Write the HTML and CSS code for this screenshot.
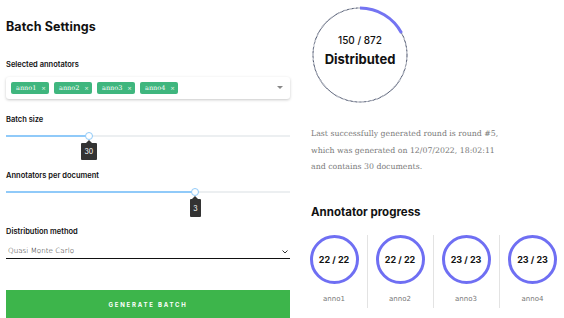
FILE: index.html
```html
<!DOCTYPE html>
<html>
<head>
<meta charset="utf-8">
<link rel="stylesheet" href="styles.css">
</head>
<body>
<div class="page">
  <div class="left">
    <h1 class="title">Batch Settings</h1>
    <div class="label first">Selected annotators</div>
    <div class="multi">
      <span class="chip">anno1 <span class="x">×</span></span>
      <span class="chip">anno2 <span class="x">×</span></span>
      <span class="chip">anno3 <span class="x">×</span></span>
      <span class="chip">anno4 <span class="x">×</span></span>
      <span class="caret"></span>
    </div>
    <div class="label gap16">Batch size</div>
    <div class="slider">
      <div class="track"></div>
      <div class="fill" style="width:29.2%"></div>
      <div class="thumb" style="left:29.2%"></div>
      <div class="tip wide" style="left:29.2%">30</div>
    </div>
    <div class="label gap30">Annotators per document</div>
    <div class="slider">
      <div class="track"></div>
      <div class="fill" style="width:66.5%"></div>
      <div class="thumb" style="left:66.5%"></div>
      <div class="tip narrow" style="left:66.5%">3</div>
    </div>
    <div class="label gap30">Distribution method</div>
    <div class="select">
      <span>Quasi Monte Carlo</span>
      <svg class="chev" width="6" height="4" viewBox="0 0 6 4"><path d="M0.5 0.5 L3 3 L5.5 0.5" fill="none" stroke="#333" stroke-width="1"/></svg>
    </div>
    <button class="btn">GENERATE BATCH</button>
  </div>
  <div class="right">
    <div class="main-ring">
      <svg width="100" height="100" viewBox="0 0 100 100">
        <circle cx="50" cy="50" r="47" fill="none" stroke="#1f2a48" stroke-width="1.1" stroke-dasharray="0.7 0.6"/>
        <circle cx="50" cy="50" r="47" fill="none" stroke="#7474f2" stroke-width="3" stroke-dasharray="50.8 300" transform="rotate(-90 50 50)"/>
      </svg>
      <div class="ring-text">
        <div class="count">150 / 872</div>
        <div class="dist">Distributed</div>
      </div>
    </div>
    <p class="info">Last successfully generated round is round #5,<br>which was generated on 12/07/2022, 18:02:11<br>and contains 30 documents.</p>
    <h2 class="sub">Annotator progress</h2>
    <div class="grid">
      <div class="cell"><div class="ring">22 / 22</div><div class="name">anno1</div></div>
      <div class="cell"><div class="ring">22 / 22</div><div class="name">anno2</div></div>
      <div class="cell"><div class="ring">23 / 23</div><div class="name">anno3</div></div>
      <div class="cell"><div class="ring">23 / 23</div><div class="name">anno4</div></div>
    </div>
  </div>
</div>
</body>
</html>
```
FILE: styles.css
```css
* { box-sizing: border-box; }
html, body { margin: 0; padding: 0; background: #fff; }
body { font-family: Inter, "Open Sans", sans-serif; color: #111; width: 564px; height: 318px; overflow: hidden; }
.page { display: flex; }
.left { width: 284px; margin-left: 6px; display: flex; flex-direction: column; }
.title { margin: 19px 0 0; font-size: 12.5px; line-height: 16px; font-weight: 700; letter-spacing: 0.1px; }
.label { font-size: 7.5px; line-height: 10px; font-weight: 600; }
.label.first { margin-top: 25px; }
.gap16 { margin-top: 16px; }
.gap30 { margin-top: 30px; }
.multi { margin-top: 7px; height: 22px; border-radius: 3px; box-shadow: 0 1px 3px rgba(0,0,0,0.22); display: flex; align-items: center; padding-left: 5px; gap: 5px; position: relative; }
.chip { background: #3fb67e; color: #fff; font-family: "DejaVu Serif", serif; font-size: 6.5px; height: 12px; line-height: 12px; border-radius: 2px; padding: 0 4px 0 5px; display: inline-flex; align-items: center; gap: 5px; width: 38px; }
.chip .x { font-family: Inter, sans-serif; font-size: 7px; color: #cfeedd; }
.caret { position: absolute; right: 7px; top: 9px; width: 0; height: 0; border-left: 3.5px solid transparent; border-right: 3.5px solid transparent; border-top: 3.5px solid #888; }
.slider { margin-top: 6px; height: 10px; position: relative; }
.track { position: absolute; left: 0; right: 0; top: 4px; height: 2px; background: #eceff1; }
.fill { position: absolute; left: 0; top: 4px; height: 2px; background: #90caf9; }
.thumb { position: absolute; top: 1px; width: 8px; height: 8px; margin-left: -4px; border-radius: 50%; background: #fff; border: 1px solid #90caf9; }
.tip { position: absolute; top: 12px; height: 17px; background: #333; color: #fff; font-size: 7px; display: flex; align-items: center; justify-content: center; border-radius: 1px; }
.tip::before { content: ""; position: absolute; top: -3px; left: 50%; margin-left: -3px; border-left: 3px solid transparent; border-right: 3px solid transparent; border-bottom: 3px solid #333; }
.tip.wide { width: 16px; margin-left: -8px; }
.tip.narrow { width: 11px; margin-left: -5px; height: 18px; }
.select { margin-top: 1px; height: 21px; padding: 6px 0 0 2px; border-bottom: 1px solid #111; display: flex; justify-content: space-between; font-size: 7.2px; line-height: 14px; color: #222; font-family: "DejaVu Sans", sans-serif; font-weight: 300; }
.chev { margin: 6px 2px 0 0; }
.btn { margin-top: 31px; height: 28px; width: 284px; border: none; background: #3db54b; color: #fff; font-family: Inter, sans-serif; font-size: 6px; font-weight: 700; letter-spacing: 1.8px; padding: 0; }
.right { margin-left: 11px; width: 263px; display: flex; flex-direction: column; }
.main-ring { margin: 5px 0 0 9px; width: 100px; height: 100px; position: relative; }
.main-ring svg { position: absolute; left: 0; top: 0; }
.ring-text { position: absolute; inset: 0; display: flex; flex-direction: column; align-items: center; justify-content: center; }
.count { font-size: 10px; line-height: 12px; font-weight: 500; margin-top: -10px; }
.dist { font-size: 13px; line-height: 16px; font-weight: 700; margin-top: 5px; }
.info { margin: 21px 0 0 10px; font-family: "DejaVu Serif", serif; font-size: 7.8px; line-height: 16.5px; color: #7a7a7a; font-weight: 300; }
.sub { margin: 29px 0 0 10px; font-size: 11.5px; line-height: 14px; font-weight: 700; }
.grid { margin-top: 16px; display: grid; grid-template-columns: repeat(4, 66px); margin-left: 0.5px; }
.cell { display: flex; flex-direction: column; align-items: center; border-right: 1px solid #e3e3e3; height: 73px; }
.cell:last-child { border-right: none; }
.ring { width: 49px; height: 49px; border-radius: 50%; border: 3px solid #6f6ff3; display: flex; align-items: center; justify-content: center; font-size: 9px; font-weight: 700; }
.name { margin-top: 11px; font-size: 7px; color: #777; font-family: "DejaVu Sans", sans-serif; }
```
